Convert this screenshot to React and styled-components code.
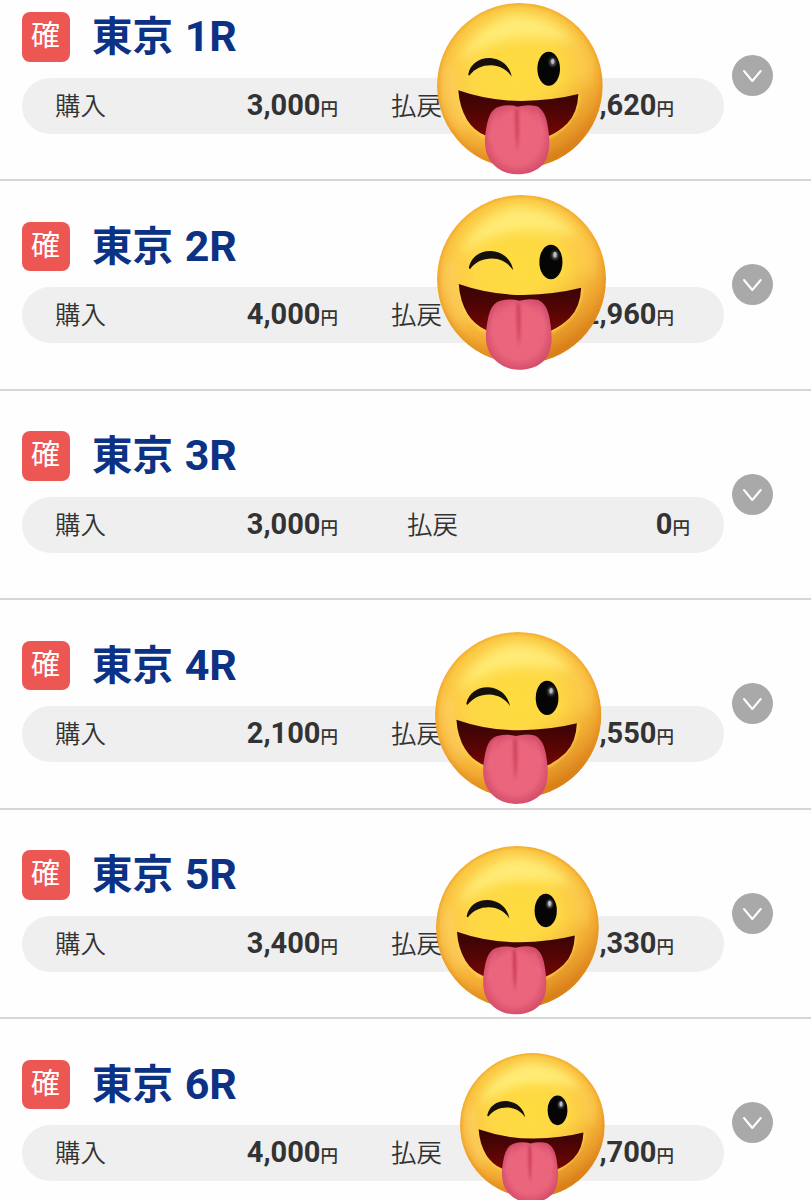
import React from "react";
import styled, { createGlobalStyle } from "styled-components";

const GlobalStyle = createGlobalStyle`
  * {
    box-sizing: border-box;
  }
  body {
    margin: 0;
    background: #fefefe;
    color: #333;
    font-family: Roboto, "Noto Sans CJK JP", sans-serif;
  }
`;

const RaceList = styled.ul`
  width: 811px;
  height: 1200px;
  margin: 0;
  padding: 0;
  list-style: none;
  overflow: hidden;
`;

const RaceRow = styled.li`
  position: relative;
  display: flex;
  gap: 8px;
  height: 209.5px;
  padding: 40.5px 0 0 22px;
  border-bottom: 2px solid #d6d6d6;
  &:first-child {
    height: 181px;
    padding-top: 12px;
  }
`;

const RaceBody = styled.div`
  width: 702px;
`;

const RaceHeader = styled.div`
  display: flex;
  align-items: center;
  height: 49.5px;
  margin-bottom: 16px;
`;

const Badge = styled.span`
  display: flex;
  align-items: center;
  justify-content: center;
  width: 48px;
  height: 49.5px;
  margin-right: 22px;
  padding: 0 1px 0 0;
  border-radius: 8px;
  background: #ec5754;
  color: #fff;
  font-size: 29px;
  line-height: 1;
`;

const RaceName = styled.h2`
  margin: 0;
  color: #0b3284;
  font-size: 43px;
  font-weight: 700;
  line-height: 48px;
  white-space: pre;
  .place {
    margin-right: 1px;
    font-size: 40.5px;
  }
`;

const Summary = styled.div`
  display: flex;
  justify-content: space-between;
  align-items: center;
  height: 56px;
  padding: 2px 34px 0 33px;
  border-radius: 28px;
  background: #efefef;
`;

const Cell = styled.div`
  display: flex;
  justify-content: space-between;
  align-items: baseline;
  width: 283px;
  margin-right: ${(props) => (props.$hit ? "16px" : "0")};
  margin-left: ${(props) => (props.$hit ? "-16px" : "0")};
  line-height: 40px;
  .label {
    font-size: 25.5px;
    font-weight: 350;
  }
  .amount {
    font-size: 29px;
    font-weight: 700;
  }
  .yen {
    font-size: 17.5px;
    font-weight: 500;
  }
`;

const Toggle = styled.button`
  width: 41px;
  height: 41px;
  margin-top: 42.5px;
  padding: 0;
  border: 0;
  border-radius: 50%;
  background: #a9a9a9;
  svg {
    display: block;
  }
`;

const Sticker = styled.svg`
  position: absolute;
  left: ${(props) => props.$left}px;
  top: ${(props) => props.$top}px;
  width: ${(props) => props.$size}px;
  overflow: visible;
`;

const races = [
  { no: 1, bet: "3,000", payout: ",620", face: [436.7, 3.3, 165.7] },
  { no: 2, bet: "4,000", payout: "2,960", face: [437.4, 13.7, 169] },
  { no: 3, bet: "3,000", payout: "0" },
  { no: 4, bet: "2,100", payout: ",550", face: [435.4, 32, 166.3] },
  { no: 5, bet: "3,400", payout: ",330", face: [436.2, 36.8, 162.8] },
  { no: 6, bet: "4,000", payout: ",700", face: [460.3, 34, 144.7] },
];

const WinkFace = ({ id, face }) => {
  const [left, top, size] = face;
  const ref = (name) => `url(#${name}${id})`;
  return (
    <Sticker $left={left} $top={top} $size={size} viewBox="50 10 497 515">
      <defs>
        <radialGradient id={`skin${id}`} cx="0.48" cy="0.42" r="0.58">
          <stop offset="0" stopColor="#ffdc3f" />
          <stop offset="0.45" stopColor="#fed845" />
          <stop offset="0.68" stopColor="#fbc843" />
          <stop offset="0.85" stopColor="#f6b339" />
          <stop offset="1" stopColor="#e39024" />
        </radialGradient>
        <linearGradient id={`shade${id}`} x1="0.4" y1="0.3" x2="0.75" y2="0.97">
          <stop offset="0.4" stopColor="#e38b1a" stopOpacity="0" />
          <stop offset="1" stopColor="#cc6c10" stopOpacity="0.7" />
        </linearGradient>
        <linearGradient id={`mouth${id}`} x1="0" y1="0" x2="0" y2="1">
          <stop offset="0" stopColor="#350404" />
          <stop offset="0.5" stopColor="#520504" />
          <stop offset="1" stopColor="#740705" />
        </linearGradient>
        <radialGradient id={`tongue${id}`} cx="0.5" cy="0.48" r="0.58">
          <stop offset="0" stopColor="#ec667b" />
          <stop offset="0.65" stopColor="#ea647c" />
          <stop offset="1" stopColor="#cd4766" />
        </radialGradient>
        <filter id={`soft${id}`} x="-50%" y="-50%" width="200%" height="200%">
          <feGaussianBlur stdDeviation="17" />
        </filter>
        <filter id={`fine${id}`} x="-50%" y="-50%" width="200%" height="200%">
          <feGaussianBlur stdDeviation="4" />
        </filter>
        <clipPath id={`round${id}`}>
          <ellipse cx="298.5" cy="258" rx="248.5" ry="248" />
        </clipPath>
      </defs>
      <g clipPath={ref("round")}>
        <ellipse cx="298.5" cy="258" rx="248.5" ry="248" fill={ref("skin")} />
        <ellipse cx="298.5" cy="258" rx="248.5" ry="248" fill={ref("shade")} />
        <path
          d="M112 196Q150 84 274 44Q390 36 470 134Q380 110 294 116Q190 124 112 196Z"
          fill="#ffef80"
          opacity="0.85"
          filter={ref("soft")}
        />
        <path
          d="M92 200Q70 300 134 380"
          fill="none"
          stroke="#ffdf88"
          strokeWidth="26"
          opacity="0.5"
          filter={ref("soft")}
        />
        <path
          d="M462 130Q505 180 500 250"
          fill="none"
          stroke="#ffd465"
          strokeWidth="26"
          opacity="0.5"
          filter={ref("soft")}
        />
        <ellipse
          cx="298.5"
          cy="258"
          rx="247"
          ry="246.5"
          fill="none"
          stroke="#e8951f"
          strokeWidth="7"
          opacity="0.55"
          filter={ref("fine")}
        />
      </g>
      <path
        d="M144 222C151 192 177 174 209 175C244 177 268 199 274 231C259 209 238 198 212 197C184 197 164 207 148 227Q143 229 144 222Z"
        fill="#15100c"
      />
      <ellipse cx="385" cy="207" rx="34" ry="51" fill="#050505" />
      <ellipse cx="397" cy="187" rx="8" ry="11" fill="#fff" opacity="0.55" filter={ref("fine")} />
      <ellipse cx="397" cy="185" rx="5" ry="8" fill="#b9c0c5" />
      <path
        d="M116 272Q122 370 192 410M474 284Q470 365 385 412"
        fill="none"
        stroke="#ffd04f"
        strokeWidth="8"
        filter={ref("fine")}
      />
      <path
        d="M114 272Q205 304 304 304Q400 302 474 283Q472 340 440 372Q414 397 385 409L194 407Q160 392 140 360Q117 322 114 272Z"
        fill={ref("mouth")}
      />
      <path
        d="M236 321Q266 313 292 321Q320 313 348 319C369 328 379 352 383 385C390 430 389 466 369 493C347 517 319 524 290 524C260 523 233 512 212 486C193 460 190 427 198 384C204 349 213 328 236 321Z"
        fill={ref("tongue")}
      />
      <path
        d="M294 328Q299 392 291 454Q283 410 284 328Z"
        fill="#ba2c4c"
        opacity="0.6"
        filter={ref("fine")}
      />
      <path
        d="M230 340Q214 372 210 420M348 340Q362 362 368 400"
        fill="none"
        stroke="#f2869a"
        strokeWidth="12"
        strokeLinecap="round"
        opacity="0.2"
        filter={ref("fine")}
      />
    </Sticker>
  );
};

const RaceItem = ({ race }) => (
  <RaceRow>
    <RaceBody>
      <RaceHeader>
        <Badge>確</Badge>
        <RaceName>
          <span className="place">東京</span> {race.no}R
        </RaceName>
      </RaceHeader>
      <Summary>
        <Cell>
          <span className="label">購入</span>
          <span className="amount">
            {race.bet}
            <span className="yen">円</span>
          </span>
        </Cell>
        <Cell $hit={Boolean(race.face)}>
          <span className="label">払戻</span>
          <span className="amount">
            {race.payout}
            <span className="yen">円</span>
          </span>
        </Cell>
      </Summary>
    </RaceBody>
    <Toggle>
      <svg width="41" height="41" viewBox="0 0 41 41" fill="none">
        <path
          d="M12 16L20.3 26L28.7 16"
          stroke="#fff"
          strokeWidth="2"
          strokeLinecap="round"
          strokeLinejoin="round"
        />
      </svg>
    </Toggle>
    {race.face ? <WinkFace id={race.no} face={race.face} /> : null}
  </RaceRow>
);

const App = () => (
  <>
    <GlobalStyle />
    <RaceList>
      {races.map((race) => (
        <RaceItem key={race.no} race={race} />
      ))}
    </RaceList>
  </>
);

export default App;
